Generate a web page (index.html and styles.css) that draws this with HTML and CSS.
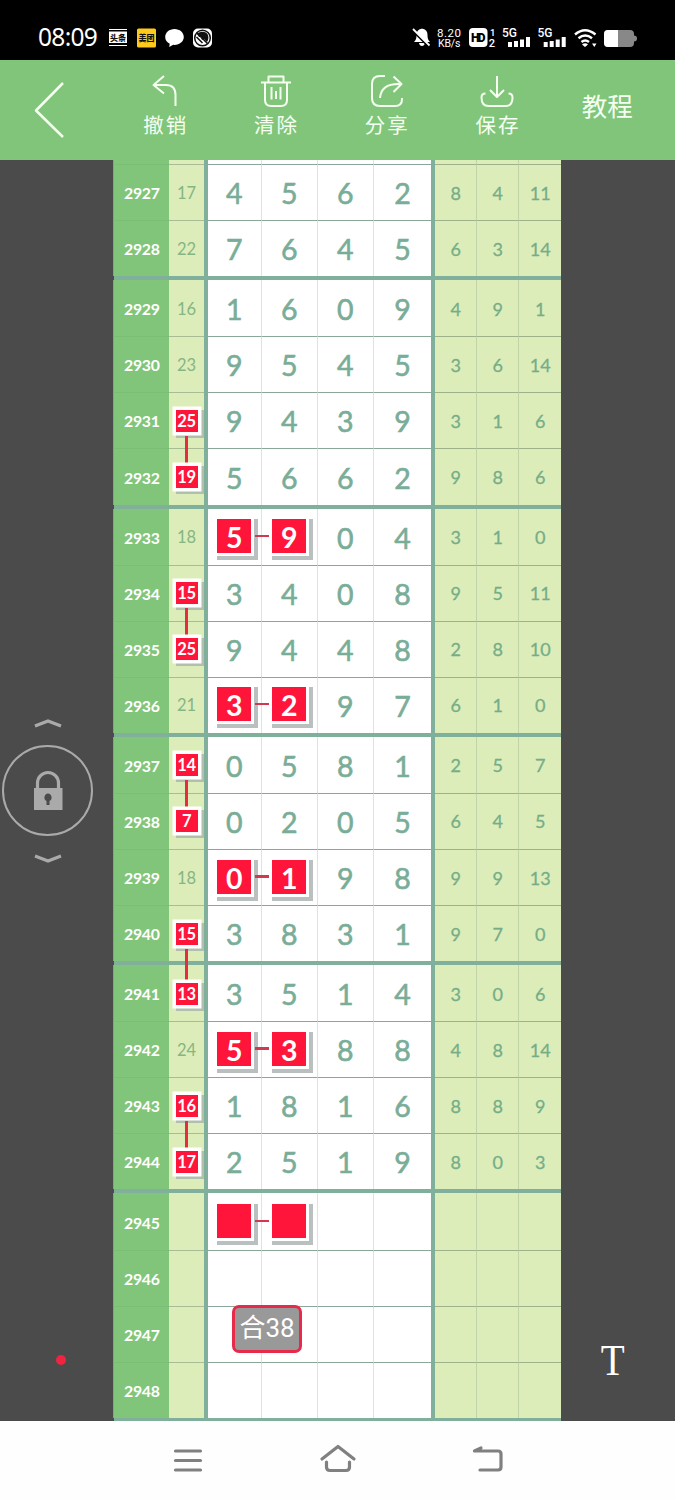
FILE: index.html
```html
<!DOCTYPE html>
<html lang="zh-CN">
<head>
<meta charset="utf-8">
<title>走势图</title>
<link rel="stylesheet" href="styles.css">
</head>
<body>
<header class="status">
  <span class="clock">08:09</span>
  <svg class="status-left" width="106" height="24" viewBox="0 0 106 24">
    <rect x="0" y="3" width="18" height="1"/><rect x="0" y="5.500" width="18" height="11.500"/><rect x="0" y="19" width="18" height="1"/>
    <text class="tiny" x="1" y="14.500">头条</text>
    <rect class="gold" x="28" y="2.500" width="19" height="19" rx="1.500"/>
    <text class="tiny" x="29.500" y="15">美团</text>
    <path d="M65.500 3c-5.200 0-9.300 3.600-9.300 8 0 3 1.800 5.400 4.500 6.700l-.5 3.300 4-2.200 1.300.1c5.200 0 9.300-3.500 9.300-7.900s-4.100-8-9.300-8z"/>
    <rect x="84" y="2.500" width="19" height="19" rx="5"/>
    <circle class="ring" cx="93.500" cy="12" r="7.800"/><path class="ink" d="M88 8c3-3 8-3 10.500 0 1.500 3 1 6-.5 8l-3-3-2 1-1-3-2 0z"/>
    <path class="ring" d="M88 7l10.500 10.500M87.500 11l6 6"/>
  </svg>
  <svg class="status-right" width="230" height="28" viewBox="410 24 230 28">
    <path d="M414 42c2-2 2.500-3.500 2.500-7 0-3.500 1.800-5.500 4.700-6.200h1.600c3 .7 4.700 2.700 4.700 6.200 0 3.500.5 5 2.500 7zM419 43h6c-.5 4-5.500 4-6 0z"/>
    <path class="slash-bg" d="M413 31l16 16"/><path class="slash" d="M413 29l16.500 16.500"/>
    <text x="437" y="37" font-size="11.500" textLength="24">8.20</text>
    <text x="438" y="47" font-size="10.500" textLength="22.500">KB/s</text>
    <rect x="469" y="28" width="18.500" height="19" rx="4"/>
    <text class="dark" x="471" y="42" font-size="12" textLength="14.500">HD</text>
    <text class="bold" x="490" y="36" font-size="9.500">1</text><text class="bold" x="488.700" y="47" font-size="11">2</text>
    <text class="bold" x="502" y="37" font-size="12" textLength="15">5G</text>
    <text class="bold" x="537.500" y="37" font-size="12" textLength="15">5G</text>
    <g id="bars"><rect x="508" y="42" width="4" height="5"/><rect x="514" y="41" width="4" height="6"/><rect x="520" y="39.500" width="4" height="7.500"/><rect x="526" y="37" width="4" height="10"/></g>
    <use href="#bars" x="35.700"/>
    <path class="wifi" d="M575 34.500q10-8.500 20.500 0M578.500 38.300q6.700-5.500 13.500 0M581.500 42q3.700-3 7.500 0"/>
    <path d="M582 44.500q3.300-2.500 6 0l-3 2.500zM592 43.500h4.500l-2.200 3.500z"/>
    <path class="battery" d="M608 30h22q4 0 4 4v1.500q3 0 3 3t-3 3V43q0 4-4 4h-22q-4 0-4-4v-9q0-4 4-4z"/>
    <path d="M608 30h10v17h-10q-4 0-4-4v-9q0-4 4-4z"/>
  </svg>
</header>

<nav class="toolbar">
  <svg class="back" width="34" height="60" viewBox="0 0 34 60"><path d="M30 3L3 30.500 30 57"/></svg>
  <div class="tools">
    <div class="tool"><svg width="36" height="36" viewBox="0 0 36 36"><path d="M17 3L6.500 12 17 20.500M6.500 12H19q9.500 0 9.500 10v11"/></svg><span>撤销</span></div>
    <div class="tool"><svg width="36" height="36" viewBox="0 0 36 36"><path d="M3 9.500h30M10.500 9V3.500h15V9M7 10v17q0 6 6 6h10q6 0 6-6V10M13.500 14v12.500M18 18v8M22.500 14v12.500"/></svg><span>清除</span></div>
    <div class="tool"><svg width="36" height="36" viewBox="0 0 36 36"><path d="M16 3h-5Q3 3 3 11v14q0 8 8 8h15q7 0 7-7v-1M24.500 3.500l8 7.500-8 8M32 11Q12 10 11 25"/></svg><span>分享</span></div>
    <div class="tool"><svg width="36" height="36" viewBox="0 0 36 36"><path d="M18 3v21M11 17l7 7 7-7M6.500 20.500q-4 0-4 4 0 8.500 7 8.500h17q7 0 7-8.500 0-4-4-4"/></svg><span>保存</span></div>
  </div>
  <span class="tutorial">教程</span>
</nav>

<main class="stage">
  <aside class="lock">
    <svg width="28" height="10" viewBox="0 0 28 10"><path d="M1 8l13-5 13 5"/></svg>
    <div class="lock-ring">
      <svg width="30" height="42" viewBox="0 0 30 42"><path d="M4.500 20v-7a10.500 10.500 0 0 1 21 0v7"/><rect x="1" y="18" width="28.500" height="22"/><path class="hole" d="M15 23.500a4 4 0 0 0-1.500 7.500v4h3v-4a4 4 0 0 0-1.500-7.500z"/></svg>
    </div>
    <svg width="28" height="10" viewBox="0 0 28 10"><path d="M1 2l13 5 13-5"/></svg>
  </aside>
  <i class="dot"></i>
  <section class="chart" id="chart"></section>
  <span class="text-tool">T</span>
  <div class="note">合38</div>
</main>

<footer class="sysnav">
  <svg width="36" height="36" viewBox="0 0 36 36"><path d="M5.500 9h25M5.500 18.500h25M5.500 28h25"/></svg>
  <svg width="40" height="36" viewBox="0 0 40 36"><path d="M4 17L20 4.500 36 17M8.500 20v5q0 3.500 3.500 3.500h16q3.500 0 3.500-3.500v-5"/></svg>
  <svg width="36" height="36" viewBox="0 0 36 36"><path d="M11 6L4.500 9H28q3 0 3 3v13q0 3-3 3H10"/></svg>
</footer>
<script src="chart.js"></script>
</body>
</html>
```

FILE: styles.css
```css
* { box-sizing: border-box; }
body { margin: 0; width: 675px; height: 1500px; overflow: hidden; background: #fff; font-family: Lato, "Noto Sans CJK SC", sans-serif; }
svg { display: block; flex: none; }

.status { height: 60px; background: #000; color: #fff; display: flex; align-items: center; padding: 15px 35px 0 38px; }
.clock { width: 71px; font: 24.500px/28px "Noto Sans", sans-serif; letter-spacing: -.7px; white-space: nowrap; margin-top: -2px; }
.status svg { fill: #fff; }
.status-right { margin-left: auto; }
.status text { font-family: Roboto, "Noto Sans CJK SC", sans-serif; }
.status .tiny { font-size: 8px; font-weight: 900; fill: #111; }
.status .gold { fill: #fdc91c; }
.status .ink { fill: #111; }
.status .ring { fill: none; stroke: #111; stroke-width: 1.500; }
.status .dark { fill: #000; font-weight: 900; }
.status .bold { font-weight: 500; }
.slash-bg { stroke: #000; stroke-width: 2; }
.slash { stroke: #fff; stroke-width: 1.8; }
.status .wifi { fill: none; stroke: #fff; stroke-width: 2.5; }
.battery { fill: #888; }

.toolbar { height: 100px; background: #81c57a; color: #f4fff0; display: flex; align-items: flex-start; padding-left: 33px; }
.toolbar svg { fill: none; stroke: #f4fff0; stroke-width: 2; stroke-linejoin: round; }
.toolbar .back { margin-top: 20px; stroke-width: 2.5; }
.tools { display: flex; margin-left: 43px; padding-top: 13px; }
.tool { width: 110.700px; display: flex; flex-direction: column; align-items: center; font: 20.500px/28px "Noto Sans CJK SC", sans-serif; }
.tool span { letter-spacing: 2px; margin: 1px -1px 0 0; }
.tutorial { margin: 26px 0 0 29px; font: 25.500px/38px "Noto Sans CJK SC", sans-serif; }

.stage { position: relative; height: 1261px; background: #4b4b4b; display: flex; overflow: hidden; }
.lock { width: 95px; padding-top: 558px; display: flex; flex-direction: column; align-items: center; }
.lock svg { fill: none; stroke: #aaa; stroke-width: 3.200; }
.lock-ring { width: 91px; height: 91px; border: 2.500px solid #aaa; border-radius: 50%; margin: 17px 0 18px; display: flex; align-items: center; justify-content: center; }
.lock .lock-ring rect { fill: #aaa; stroke: none; }
.lock .hole { fill: #4b4b4b; stroke: none; }
.dot { position: absolute; left: 56px; top: 1195px; width: 10px; height: 10px; border-radius: 50%; background: #f22341; }
.text-tool { position: absolute; left: 599px; top: 1175px; color: #fff; font: 45px/50px "Liberation Serif", serif; transform: scaleX(.87); }
.note { position: absolute; left: 232px; top: 1145px; width: 70px; height: 48px; border: 3px solid #e52a4a; border-radius: 7px; background: #999; color: #fff; font: 26px/40px Roboto, "Noto Sans CJK SC", sans-serif; text-align: center; white-space: nowrap; }

.chart { margin: -52px 0 0 18.300px; width: 448px; flex: none; height: 1313px; overflow: hidden; }
.row { display: grid; grid-template-columns: 56px 34.500px 4px 54px 56px 56px 57.500px 4px 42px 42px 42px; height: 56.080px; }
.row > span { display: flex; align-items: center; justify-content: center; border-top: 1px solid #8ba79a; }
.row .issue { background: #81c57a; color: #fff; font-size: 15.800px; font-weight: 700; letter-spacing: -.3px; border-top-color: #7bbf76; border-left: 1px solid #77ad79; }
.row .sum { background: #dcedb9; color: #86b583; font-size: 16.500px; border-top-color: #a8bd95; }
.row .rule { background: #80af9b; border: 0; }
.row .num { background: #fff; color: #7aad98; font-size: 28.500px; -webkit-text-stroke: .6px currentColor; padding-top: 1px; border-right: 1px solid #dce4e2; }
.row .num.last { border-right: 0; }
.row .tail { background: #dcedb9; color: #76ad88; font-size: 18px; -webkit-text-stroke: .3px currentColor; border-right: 1px solid #c1d3a8; border-top-color: #9db28b; }
.row .tail.last { border-right: 0; }
.thick { height: 4px; background: #80af9b; margin-left: 1px; }
.thick + .row > span { border-top-width: 0; padding-top: 1px; }
.thick + .row > .num { padding-top: 2px; }

.row .mark { position: relative; z-index: 1; display: flex; align-items: center; justify-content: center; background: #ff1539; color: #fff; }
.row .mark.small { width: 22px; height: 22px; font-size: 16.500px; font-weight: 700; letter-spacing: -.3px; box-shadow: 0 0 0 3.500px #fff, 3px 3px 0 3px #b3bfae; }
.row .mark.big { width: 34px; height: 34px; margin-top: -3px; font-weight: 700; -webkit-text-stroke: 0; padding-top: 2px; box-shadow: 0 0 0 3px #fff, 3.500px 3.500px 0 3.500px #b9c0bf; }
.mark.down::after { content: ""; position: absolute; left: 9.500px; top: 26px; width: 3px; height: 27px; background: #e62d40; }
.mark.down.long::after { height: 31px; }
.mark.right::after { content: ""; position: absolute; left: 38px; top: 15.500px; width: 14px; height: 2.500px; background: #cf3a50; }

.sysnav { height: 79px; background: #fefefe; display: flex; justify-content: center; align-items: flex-start; gap: 112px; padding-top: 21px; }
.sysnav svg { fill: none; stroke: #808080; stroke-width: 3.200; stroke-linecap: round; stroke-linejoin: round; }
```

FILE: chart.js
```js
// issue | sum | four digits | three tail values | marks: d = link down, m = marked, p = marked pair
const rows = [
  ['', '', '', '', ''],
  [2927, 17, '4562', '8 4 11', ''], [2928, 22, '7645', '6 3 14', ''],
  [2929, 16, '1609', '4 9 1', ''], [2930, 23, '9545', '3 6 14', ''],
  [2931, 25, '9439', '3 1 6', 'd'], [2932, 19, '5662', '9 8 6', 'm'],
  [2933, 18, '5904', '3 1 0', 'p'], [2934, 15, '3408', '9 5 11', 'd'],
  [2935, 25, '9448', '2 8 10', 'm'], [2936, 21, '3297', '6 1 0', 'p'],
  [2937, 14, '0581', '2 5 7', 'd'], [2938, 7, '0205', '6 4 5', 'm'],
  [2939, 18, '0198', '9 9 13', 'p'], [2940, 15, '3831', '9 7 0', 'dl'],
  [2941, 13, '3514', '3 0 6', 'm'], [2942, 24, '5388', '4 8 14', 'p'],
  [2943, 16, '1816', '8 8 9', 'd'], [2944, 17, '2519', '8 0 3', 'm'],
  [2945, '', '', '', 'p'], [2946, '', '', '', ''], [2947, '', '', '', ''], [2948, '', '', '', '']
];
let html = '';
rows.forEach(([issue, sum, digits, tail, mark]) => {
  const close = issue && issue % 4 === 0;
  const linked = mark[0] === 'd' || mark === 'm';
  const sumText = linked
    ? `<b class="mark small${mark[0] === 'd' ? ' down' : ''}${mark === 'dl' ? ' long' : ''}">${sum}</b>` : sum;
  html += `<div class="row"><span class="issue">${issue}</span><span class="sum">${sumText}</span><span class="rule"></span>`;
  for (let i = 0; i < 4; i++) {
    const d = digits[i] || '';
    const cell = mark === 'p' && i < 2 ? `<b class="mark big${i === 0 ? ' right' : ''}">${d}</b>` : d;
    html += `<span class="num${i === 3 ? ' last' : ''}">${cell}</span>`;
  }
  html += '<span class="rule"></span>';
  const t = tail.split(' ');
  for (let i = 0; i < 3; i++) html += `<span class="tail${i === 2 ? ' last' : ''}">${t[i] || ''}</span>`;
  html += '</div>';
  if (close) html += '<div class="thick"></div>';
});
document.getElementById('chart').innerHTML = html;
```
